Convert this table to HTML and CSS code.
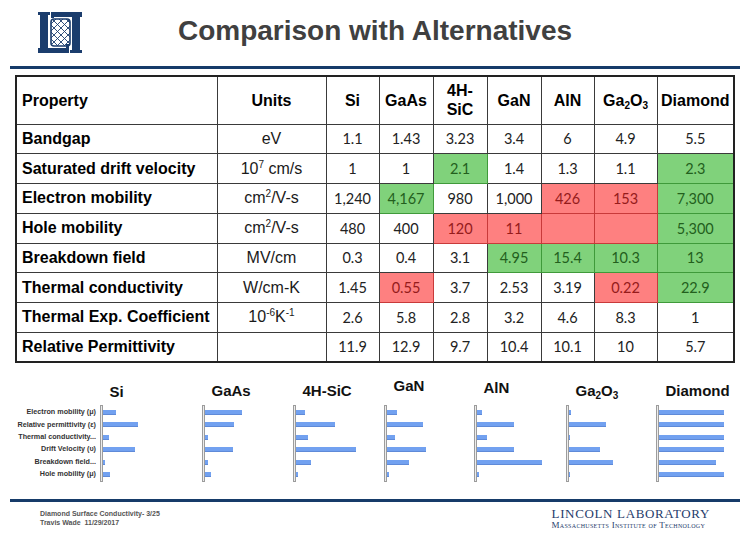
FILE: index.html
```html
<!DOCTYPE html>
<html lang="en">
<head>
<meta charset="utf-8">
<title>Comparison with Alternatives</title>
<link rel="stylesheet" href="styles.css">
</head>
<body>
<header class="header">
  <svg class="logo" viewBox="0 0 48 44" width="48" height="44" aria-hidden="true">
    <defs>
      <clipPath id="net"><rect x="15" y="9" width="19" height="27" rx="3"/></clipPath>
    </defs>
    <g fill="#1b3d6d">
      <rect x="2" y="2" width="12" height="3"/>
      <rect x="4" y="2" width="8" height="41"/>
      <rect x="2" y="38" width="31" height="5"/>
      <rect x="30" y="34" width="3" height="9"/>
      <rect x="15" y="2" width="31" height="5"/>
      <rect x="15" y="2" width="3" height="6"/>
      <rect x="36" y="2" width="8" height="41"/>
      <rect x="34" y="40" width="12" height="3"/>
    </g>
    <g clip-path="url(#net)" stroke="#1b3d6d" stroke-width="0.9" fill="none">
      <path d="M10 -11L40 19M10 -4L40 26M10 3L40 33M10 10L40 40M10 17L40 47M10 24L40 54M10 31L40 61"/>
      <path d="M10 19L40 -11M10 26L40 -4M10 33L40 3M10 40L40 10M10 47L40 17M10 54L40 24M10 61L40 31"/>
    </g>
    <rect x="15" y="9" width="19" height="27" rx="3" fill="none" stroke="#1b3d6d" stroke-width="1.6"/>
  </svg>
  <h1 class="title">Comparison with Alternatives</h1>
</header>
<div class="rule"></div>

<table class="props">
  <colgroup>
    <col class="c-prop"><col class="c-unit"><col class="c-n53"><col class="c-n54"><col class="c-n54"><col class="c-n54"><col class="c-n53"><col class="c-n63"><col class="c-n77">
  </colgroup>
  <thead>
    <tr>
      <th class="name">Property</th>
      <th>Units</th>
      <th>Si</th>
      <th>GaAs</th>
      <th>4H-<br>SiC</th>
      <th>GaN</th>
      <th>AlN</th>
      <th>Ga<sub>2</sub>O<sub>3</sub></th>
      <th>Diamond</th>
    </tr>
  </thead>
  <tbody>
    <tr>
      <th class="name">Bandgap</th>
      <td class="unit">eV</td>
      <td class="val">1.1</td><td class="val">1.43</td><td class="val">3.23</td><td class="val">3.4</td><td class="val">6</td><td class="val">4.9</td><td class="val">5.5</td>
    </tr>
    <tr>
      <th class="name">Saturated drift velocity</th>
      <td class="unit">10<sup>7</sup> cm/s</td>
      <td class="val">1</td><td class="val">1</td><td class="val good">2.1</td><td class="val">1.4</td><td class="val">1.3</td><td class="val">1.1</td><td class="val good">2.3</td>
    </tr>
    <tr>
      <th class="name">Electron mobility</th>
      <td class="unit">cm<sup>2</sup>/V-s</td>
      <td class="val">1,240</td><td class="val good">4,167</td><td class="val">980</td><td class="val">1,000</td><td class="val bad">426</td><td class="val bad">153</td><td class="val good">7,300</td>
    </tr>
    <tr>
      <th class="name">Hole mobility</th>
      <td class="unit">cm<sup>2</sup>/V-s</td>
      <td class="val">480</td><td class="val">400</td><td class="val bad">120</td><td class="val bad">11</td><td class="val bad"></td><td class="val bad"></td><td class="val good">5,300</td>
    </tr>
    <tr>
      <th class="name">Breakdown field</th>
      <td class="unit">MV/cm</td>
      <td class="val">0.3</td><td class="val">0.4</td><td class="val">3.1</td><td class="val good">4.95</td><td class="val good">15.4</td><td class="val good">10.3</td><td class="val good">13</td>
    </tr>
    <tr>
      <th class="name">Thermal conductivity</th>
      <td class="unit">W/cm-K</td>
      <td class="val">1.45</td><td class="val bad">0.55</td><td class="val">3.7</td><td class="val">2.53</td><td class="val">3.19</td><td class="val bad">0.22</td><td class="val good">22.9</td>
    </tr>
    <tr>
      <th class="name">Thermal Exp. Coefficient</th>
      <td class="unit">10<sup>-6</sup>K<sup>-1</sup></td>
      <td class="val">2.6</td><td class="val">5.8</td><td class="val">2.8</td><td class="val">3.2</td><td class="val">4.6</td><td class="val">8.3</td><td class="val">1</td>
    </tr>
    <tr>
      <th class="name">Relative Permittivity</th>
      <td class="unit"></td>
      <td class="val">11.9</td><td class="val">12.9</td><td class="val">9.7</td><td class="val">10.4</td><td class="val">10.1</td><td class="val">10</td><td class="val">5.7</td>
    </tr>
  </tbody>
</table>

<section class="charts">
  <ul class="labels">
    <li>Electron mobility (μ)</li>
    <li>Relative permittivity (ε)</li>
    <li>Thermal conductivity...</li>
    <li>Drift Velocity (υ)</li>
    <li>Breakdown field...</li>
    <li>Hole mobility (μ)</li>
  </ul>

  <div class="chart">
    <div class="chart-title low">Si</div>
    <div class="plot"><div class="axis"></div><div class="bars">
      <div class="bar" style="width:13px"></div><div class="bar" style="width:35px"></div><div class="bar" style="width:6px"></div><div class="bar" style="width:32px"></div><div class="bar" style="width:2px"></div><div class="bar" style="width:7px"></div>
    </div></div>
  </div>

  <div class="chart">
    <div class="chart-title">GaAs</div>
    <div class="plot"><div class="axis"></div><div class="bars">
      <div class="bar" style="width:37px"></div><div class="bar" style="width:29px"></div><div class="bar" style="width:3px"></div><div class="bar" style="width:28px"></div><div class="bar" style="width:3px"></div><div class="bar" style="width:6px"></div>
    </div></div>
  </div>

  <div class="chart">
    <div class="chart-title">4H-SiC</div>
    <div class="plot"><div class="axis"></div><div class="bars">
      <div class="bar" style="width:9px"></div><div class="bar" style="width:39px"></div><div class="bar" style="width:12px"></div><div class="bar" style="width:60px"></div><div class="bar" style="width:15px"></div><div class="bar" style="width:2px"></div>
    </div></div>
  </div>

  <div class="chart">
    <div class="chart-title high">GaN</div>
    <div class="plot"><div class="axis"></div><div class="bars">
      <div class="bar" style="width:10px"></div><div class="bar" style="width:36px"></div><div class="bar" style="width:8px"></div><div class="bar" style="width:39px"></div><div class="bar" style="width:22px"></div><div class="bar" style="width:2px"></div>
    </div></div>
  </div>

  <div class="chart">
    <div class="chart-title mid">AlN</div>
    <div class="plot"><div class="axis"></div><div class="bars">
      <div class="bar" style="width:5px"></div><div class="bar" style="width:37px"></div><div class="bar" style="width:10px"></div><div class="bar" style="width:37px"></div><div class="bar" style="width:65px"></div><div class="bar" style="width:2px"></div>
    </div></div>
  </div>

  <div class="chart">
    <div class="chart-title">Ga<sub>2</sub>O<sub>3</sub></div>
    <div class="plot"><div class="axis"></div><div class="bars">
      <div class="bar" style="width:2px"></div><div class="bar" style="width:37px"></div><div class="bar" style="width:1px"></div><div class="bar" style="width:31px"></div><div class="bar" style="width:44px"></div><div class="bar" style="width:1px"></div>
    </div></div>
  </div>

  <div class="chart">
    <div class="chart-title">Diamond</div>
    <div class="plot"><div class="axis"></div><div class="bars">
      <div class="bar" style="width:65px"></div><div class="bar" style="width:65px"></div><div class="bar" style="width:65px"></div><div class="bar" style="width:65px"></div><div class="bar" style="width:57px"></div><div class="bar" style="width:65px"></div>
    </div></div>
  </div>
</section>

<div class="rule footer-rule"></div>
<footer class="footer">
  <div class="foot-left">
    <div>Diamond Surface Conductivity- 3/25</div>
    <div>Travis Wade&nbsp; 11/29/2017</div>
  </div>
  <div class="foot-right">
    <div class="lab">LINCOLN LABORATORY</div>
    <div class="mit">Massachusetts Institute of Technology</div>
  </div>
</footer>
</body>
</html>
```
FILE: styles.css
```css
* { box-sizing: border-box; }

body {
  margin: 0;
  width: 750px;
  height: 537px;
  overflow: hidden;
  background: #fff;
  font-family: "Liberation Sans", Arial, sans-serif;
  color: #000;
}

/* header */
.header {
  display: flex;
  height: 66px;
  padding-right: 84px;
}
.logo {
  flex: none;
  margin: 10px 0 0 36px;
  width: 48px;
  height: 44px;
}
.title {
  flex: 1;
  margin: 0;
  padding-top: 15px;
  text-align: center;
  font-size: 28px;
  line-height: 32px;
  font-weight: bold;
  color: #404040;
}
.rule {
  height: 3px;
  margin: 0 10px;
  background: #163b69;
}

/* table */
.props {
  margin: 6px 0 0 15px;
  width: 718px;
  table-layout: fixed;
  border-collapse: collapse;
  border: 2px solid #222;
}
.c-prop { width: 201px; }
.c-unit { width: 109px; }
.c-n53 { width: 53px; }
.c-n54 { width: 54px; }
.c-n63 { width: 63px; }
.c-n77 { width: 77px; }

.props th,
.props td {
  border: 1px solid #3a3a3a;
  padding: 0;
  text-align: center;
  vertical-align: middle;
}
.props thead th {
  height: 48px;
  font-size: 16px;
  line-height: 19px;
  font-weight: bold;
}
.props tbody tr { height: 29.75px; }
.props th.name {
  text-align: left;
  padding-left: 5px;
  font-size: 16px;
  font-weight: bold;
  white-space: nowrap;
}
.unit {
  font-size: 16px;
  color: #1a1a1a;
}
.val {
  font-family: Lato, "Open Sans", sans-serif;
  font-size: 14.5px;
  color: #222;
}
.props td.good {
  background: #80d27b;
  color: #235f1d;
  border-color: #3f9a3a;
}
.props td.bad {
  background: #fe8080;
  color: #951b1b;
  border-color: #c83a3a;
}
sup {
  font-size: 10px;
  line-height: 0;
  vertical-align: 6px;
}
sub {
  font-size: 10px;
  line-height: 0;
  vertical-align: -3px;
}

/* charts */
.charts {
  display: grid;
  grid-template-columns: 100px 102px 91px 91px 90px 92px 90px 94px;
  margin-top: 13px;
  height: 106px;
}
.labels {
  list-style: none;
  margin: 0;
  padding: 30.3px 4px 0 0;
  text-align: right;
  font-size: 7.2px;
  font-weight: bold;
  color: #333;
}
.labels li {
  height: 12.4px;
  line-height: 12.4px;
  white-space: nowrap;
}
.chart-title {
  height: 29px;
  padding: 5.5px 0 0 9.5px;
  font-size: 15px;
  line-height: 17px;
  font-weight: bold;
  color: #111;
  white-space: nowrap;
}
.chart-title.low { padding-top: 7px; }
.chart-title.mid { padding-top: 2.5px; }
.chart-title.high { padding-top: 0.5px; }
.plot {
  display: flex;
  height: 77px;
}
.axis {
  flex: none;
  width: 3px;
  height: 77px;
  border: 1px solid #9c9c9c;
  background: #ececec;
}
.bars {
  display: flex;
  flex-direction: column;
  gap: 7.4px;
  padding-top: 5px;
}
.bar {
  height: 5px;
  background: #72a1f0;
  border-bottom: 1px solid #5f8ad8;
}

/* footer */
.footer-rule {
  margin-top: 17px;
  height: 2.5px;
}
.footer {
  display: flex;
  justify-content: space-between;
  padding: 6.5px 40px 0 40px;
}
.foot-left {
  padding-top: 1px;
  font-size: 7px;
  line-height: 9px;
  font-weight: bold;
  color: #555;
}
.foot-right {
  font-family: "Liberation Serif", "Times New Roman", serif;
  color: #1f3c6c;
}
.lab {
  font-size: 13px;
  line-height: 11px;
  letter-spacing: 0.65px;
}
.mit {
  font-size: 9px;
  line-height: 10px;
  font-variant: small-caps;
  letter-spacing: 0.3px;
  margin-top: 1px;
}
```
